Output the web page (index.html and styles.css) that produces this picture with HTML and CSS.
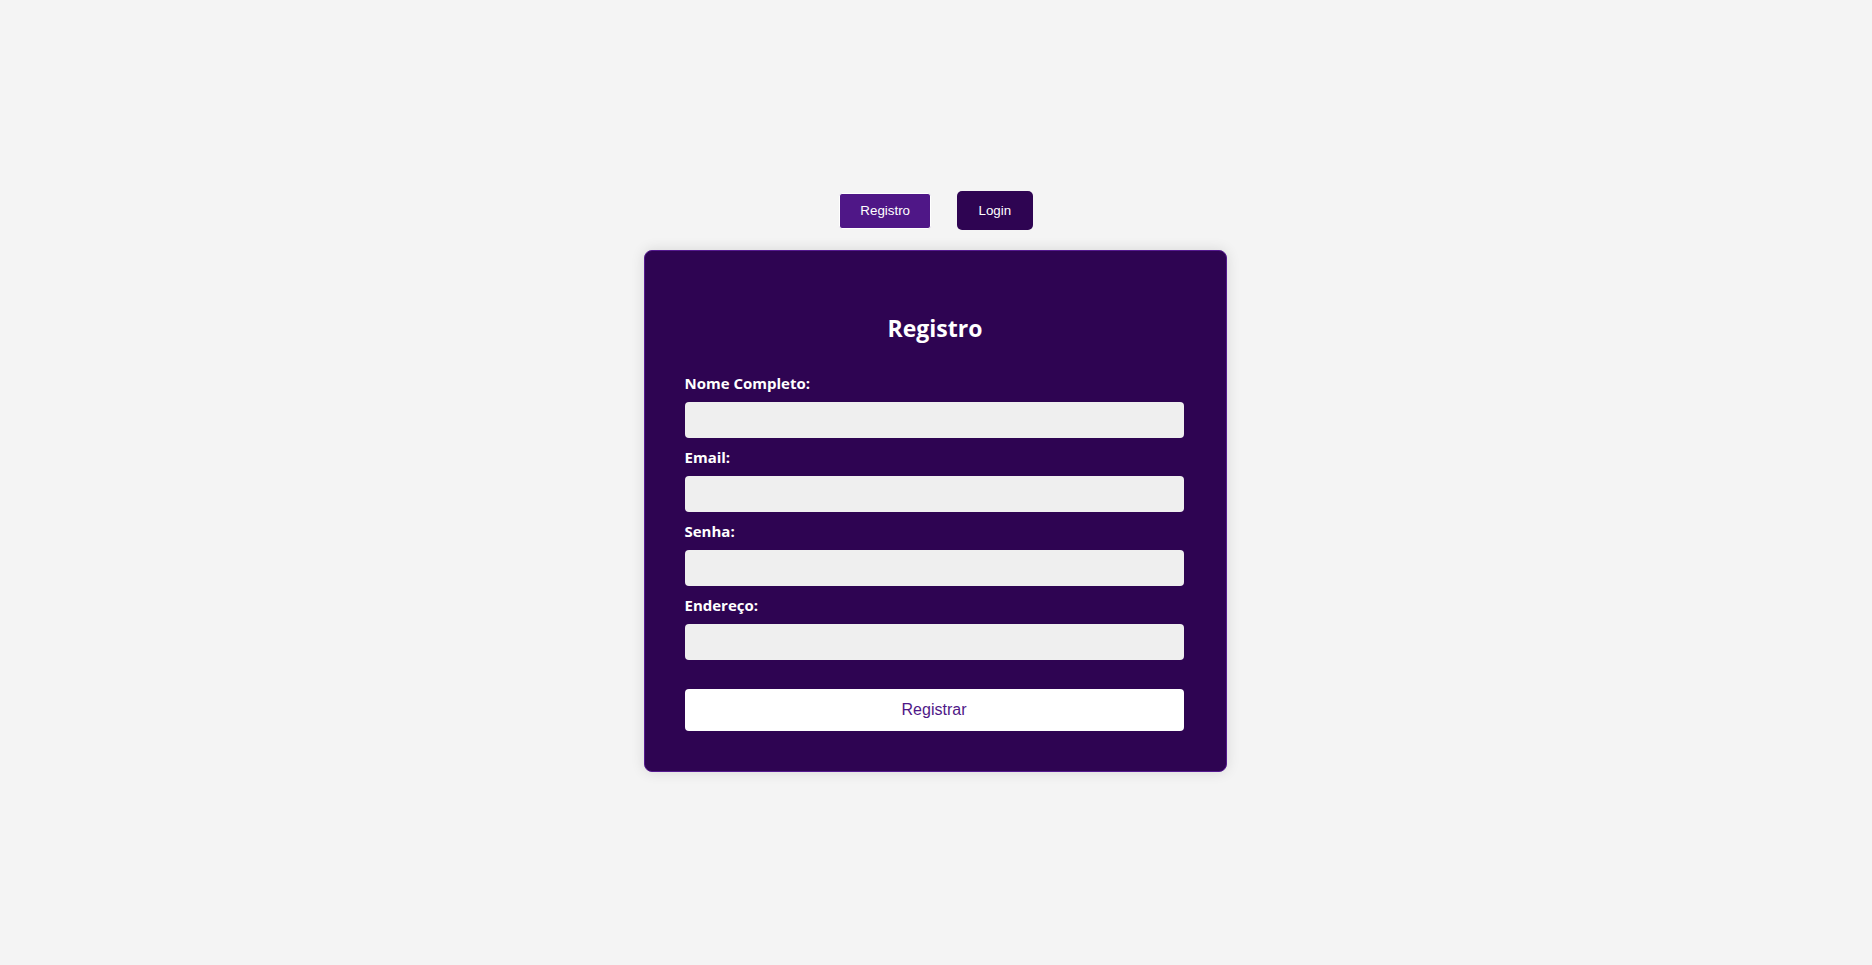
FILE: index.html
```html
<!DOCTYPE html>
<html lang="pt-BR">
<head>
<meta charset="utf-8">
<title>Registro</title>
<link rel="stylesheet" href="styles.css">
</head>
<body>
  <div class="page">
    <div class="tabs">
      <button class="tab tab-active" type="button">Registro</button>
      <button class="tab tab-login" type="button">Login</button>
    </div>
    <div class="card">
      <h2 class="title">Registro</h2>
      <form class="form">
        <label class="label" for="nome">Nome Completo:</label>
        <input class="field" id="nome" type="text">
        <label class="label" for="email">Email:</label>
        <input class="field" id="email" type="email">
        <label class="label" for="senha">Senha:</label>
        <input class="field" id="senha" type="password">
        <label class="label" for="endereco">Endereço:</label>
        <input class="field" id="endereco" type="text">
        <button class="submit" type="button">Registrar</button>
      </form>
    </div>
  </div>
</body>
</html>
```

FILE: styles.css
```css
html, body {
  margin: 0;
  padding: 0;
}

body {
  background: #f4f4f4;
  font-family: "Open Sans", "Noto Sans", sans-serif;
}

.page {
  min-height: 965px;
  display: flex;
  flex-direction: column;
  align-items: center;
  justify-content: center;
  padding-bottom: 2px;
  box-sizing: border-box;
}

.tabs {
  display: flex;
  align-items: center;
  gap: 26px;
  margin-bottom: 20px;
  height: 39px;
}

.tab {
  font-family: "Liberation Sans", Arial, sans-serif;
  font-size: 13.33px;
  color: #ffffff;
  display: flex;
  align-items: center;
  justify-content: center;
  cursor: pointer;
  margin: 0;
}

.tab-active {
  background: #4f1787;
  border: 1px solid #ffffff;
  border-radius: 3px;
  height: 36px;
  padding: 0 20px;
  box-sizing: border-box;
}

.tab-login {
  background: #2e0452;
  border: none;
  border-radius: 5px;
  height: 39px;
  padding: 0 21.5px;
  box-sizing: border-box;
}

.card {
  width: 501px;
  padding: 40px;
  background: #2e0452;
  border: 1px solid #55198f;
  border-radius: 8px;
  box-shadow: 0 0 14px rgba(0, 0, 0, 0.12);
  margin-right: 2px;
}

.title {
  margin: 21px 0 29px;
  font-size: 23px;
  line-height: 32px;
  font-weight: 700;
  color: #ffffff;
  text-align: center;
}

.form {
  display: flex;
  flex-direction: column;
  padding-right: 2px;
}

.label {
  font-size: 15px;
  line-height: 20px;
  font-weight: 700;
  color: #ffffff;
  margin-bottom: 9px;
}

.field {
  height: 36px;
  border: none;
  border-radius: 4px;
  background: #efefef;
  margin: 0 0 9px;
  padding: 0 10px;
  box-sizing: border-box;
  width: 100%;
}

.submit {
  margin-top: 20px;
  height: 42px;
  border: none;
  border-radius: 4px;
  background: #ffffff;
  color: #4f1787;
  font-family: "Liberation Sans", Arial, sans-serif;
  font-size: 16px;
  cursor: pointer;
}
```
